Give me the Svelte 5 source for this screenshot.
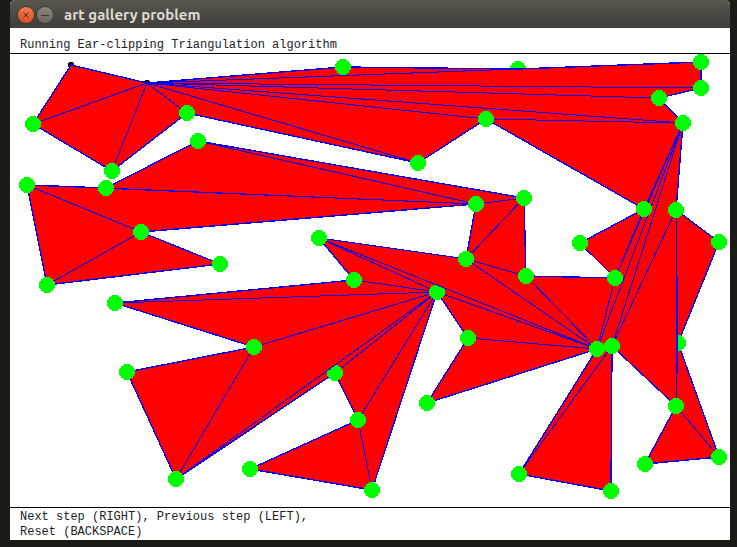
<script>
  // Polygon corners in drawing order, in canvas units (720 x 453).
  const boundary = [
    [61, 11], [137, 29], [333, 13], [508, 15], [691, 8], [691, 34], [649, 44],
    [673, 69], [666, 156], [709, 188], [668, 289], [709, 403], [635, 410],
    [666, 352], [602, 292], [601, 437], [509, 420], [587, 295], [417, 349],
    [458, 284], [427, 238], [362, 436], [240, 415], [348, 366], [325, 319],
    [166, 425], [117, 318], [244, 293], [105, 249], [344, 226], [309, 184],
    [456, 205], [466, 150], [131, 178], [210, 210], [37, 231], [17, 131],
    [96, 134], [188, 87], [514, 144], [516, 222], [605, 224], [570, 189],
    [634, 155], [476, 65], [408, 109], [177, 59], [102, 117], [23, 70]
  ];

  // Diagonals as pairs of corner indexes.
  const diagonals = [
    [1, 48], [1, 47], [1, 46], [1, 45], [1, 44], [1, 7], [1, 6], [1, 5], [1, 4], [1, 3],
    [44, 7], [7, 43], [7, 41], [7, 17], [7, 14], [8, 14], [43, 41], [41, 17],
    [8, 13], [8, 10], [10, 13], [13, 11], [14, 17], [14, 16],
    [17, 20], [17, 30], [17, 31], [17, 40], [17, 19], [31, 40], [31, 39], [32, 39],
    [32, 38], [32, 37], [32, 36], [33, 36], [20, 30], [20, 29], [20, 28], [20, 27],
    [20, 25], [20, 24], [20, 23], [27, 25], [23, 21], [33, 35]
  ];

  // Corners still unprocessed, and processed ones that later ears partly hide.
  const pending = [0, 1];
  const hidden = 3;
  const clipped = [
    { corner: 10, ears: [[8, 10, 13], [8, 13, 14]] },
    { corner: 24, ears: [[20, 25, 27]] },
    { corner: 20, ears: [[17, 30, 31]] }
  ];
  const covered = [hidden, ...clipped.map((c) => c.corner)];
  const top = boundary.filter((_, i) => !pending.includes(i) && !covered.includes(i));
  const toPoints = (list) => list.map((p) => p.join(',')).join(' ');
</script>

<div class="desktop">
  <main class="window">
    <header>
      <button class="close" aria-label="Close">
        <svg viewBox="0 0 16 16"><path d="M5.5 5.5l5 5M10.5 5.5l-5 5" /></svg>
      </button>
      <button class="minimise" aria-label="Minimise">
        <svg viewBox="0 0 16 16"><path d="M4 8.5h8" /></svg>
      </button>
      <h1>art gallery problem</h1>
    </header>
    <p class="status">Running Ear-clipping Triangulation algorithm</p>
    <svg class="canvas" viewBox="0 0 720 453" role="img" aria-label="Triangulated polygon">
      <circle cx={boundary[hidden][0]} cy={boundary[hidden][1]} r="8" />
      {#each pending as i}
        <circle class="pending" cx={boundary[i][0]} cy={boundary[i][1]} r="3" />
      {/each}
      <polygon class="outline" points={toPoints(boundary)} />
      {#each diagonals as [a, b]}
        <line x1={boundary[a][0]} y1={boundary[a][1]} x2={boundary[b][0]} y2={boundary[b][1]} />
      {/each}
      {#each clipped as { corner, ears }}
        <circle cx={boundary[corner][0]} cy={boundary[corner][1]} r="8" />
        {#each ears as ear}
          <polygon points={toPoints(ear.map((i) => boundary[i]))} />
        {/each}
      {/each}
      {#each top as [x, y]}
        <circle cx={x} cy={y} r="8" />
      {/each}
    </svg>
    <footer>
      <p>Next step (RIGHT), Previous step (LEFT),</p>
      <p>Reset (BACKSPACE)</p>
    </footer>
  </main>
</div>

<style>
  :global(body) {
    background: #1b1b16;
  }
  .desktop {
    padding: 0 7px 7px 10px;
    background: #1b1b16;
  }
  .window {
    overflow: hidden;
    border-radius: 5px 5px 0 0;
    background: #fff;
    color: #222;
    font: 12px/15px "Courier New", "Liberation Mono", monospace;
  }
  header {
    display: flex;
    align-items: center;
    gap: 3px;
    height: 28px;
    padding: 1px 8px 0;
    box-sizing: border-box;
    background: linear-gradient(#59564e, #3f3e39);
  }
  button {
    width: 16px;
    height: 16px;
    padding: 0;
    border: 0;
    border-radius: 50%;
    box-shadow: 0 0 0 1px #393832;
  }
  button svg {
    display: block;
    fill: none;
    stroke: #3c332b;
    stroke-width: 1;
  }
  .close {
    background: linear-gradient(#f57b55, #dd4c20);
  }
  .minimise {
    background: linear-gradient(#8a877f, #686660);
  }
  h1 {
    margin: 0 0 0 8px;
    color: #dfdbd2;
    font: bold 15px/20px Ubuntu, "Noto Sans", sans-serif;
  }
  p {
    margin: 0;
  }
  .status {
    padding: 10px 10px 0;
    border-bottom: 1px solid #000;
  }
  .canvas {
    display: block;
    width: 100%;
    shape-rendering: crispEdges;
  }
  polygon {
    fill: #f00;
    stroke: #00f;
  }
  .outline {
    stroke-width: 1.4;
  }
  line {
    stroke: #00f;
  }
  circle {
    fill: #0f0;
  }
  .pending {
    fill: #000;
  }
  footer {
    padding: 2px 10px 0;
    border-top: 1px solid #000;
  }
</style>
